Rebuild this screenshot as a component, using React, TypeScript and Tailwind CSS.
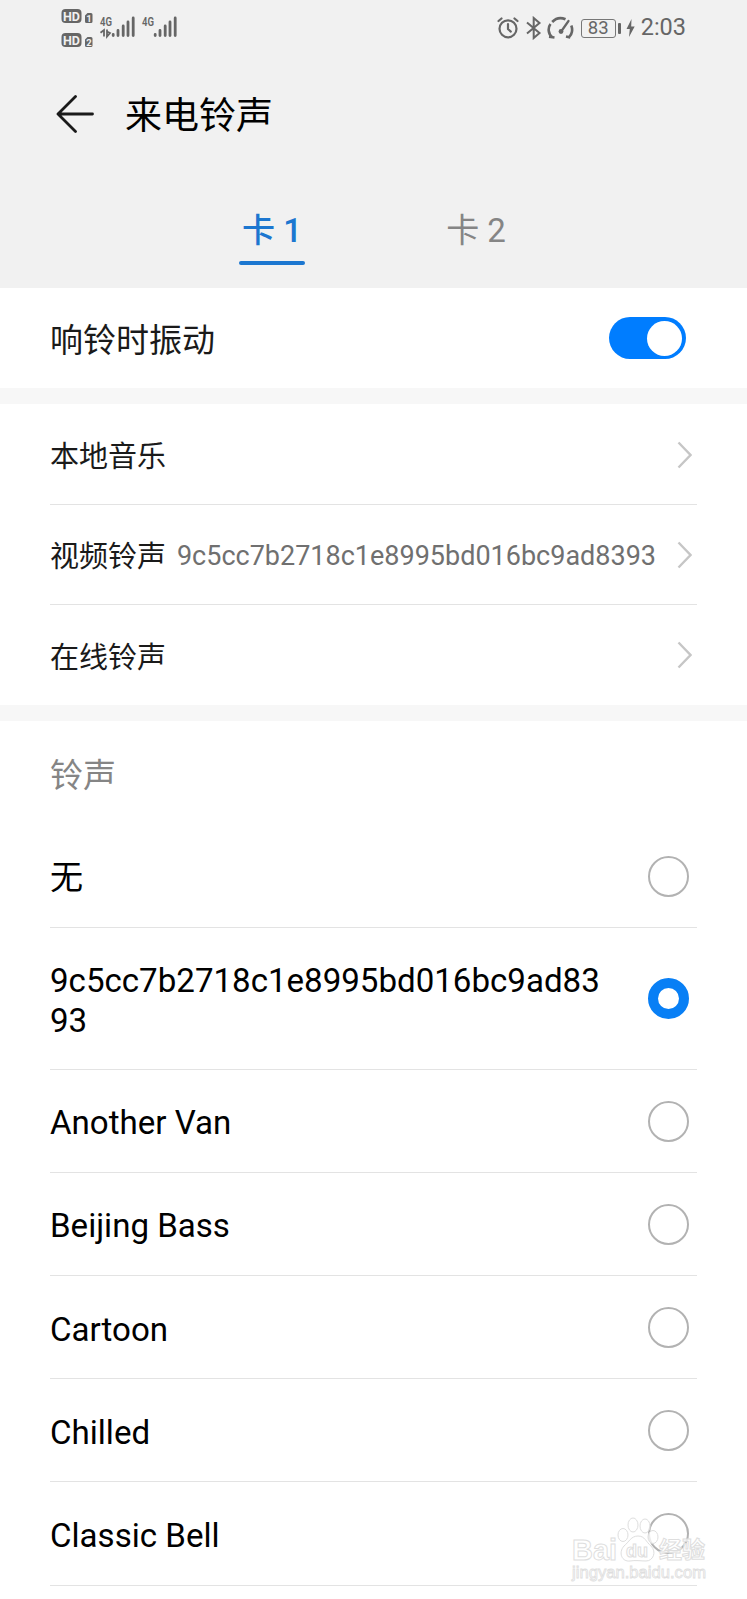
import React, { useState } from 'react';
import clsx from 'clsx';

const HASH = '9c5cc7b2718c1e8995bd016bc9ad8393';

const links = [
  { label: '本地音乐', value: '' },
  { label: '视频铃声', value: HASH },
  { label: '在线铃声', value: '' },
];

const ringtones = ['无', HASH, 'Another Van', 'Beijing Bass', 'Cartoon', 'Chilled', 'Classic Bell'];

function HdBadge({ sim }: { sim: number }) {
  return (
    <svg width="32" height="14" viewBox="0 0 32 14" className="block overflow-visible">
      <rect x="0.5" y="0" width="20" height="14" rx="4" fill="#666" />
      <text x="10.5" y="11.8" textAnchor="middle" fontSize="13.5" fontWeight="700" fill="#f1f1f1" textLength="17" lengthAdjust="spacingAndGlyphs">
        HD
      </text>
      <path d="M24 6.5 26.5 4H30a1.5 1.5 0 0 1 1.5 1.5v7A1.5 1.5 0 0 1 30 14h-4.5A1.5 1.5 0 0 1 24 12.5Z" fill="#666" />
      <text x="27.9" y="12.6" textAnchor="middle" fontSize="9.5" fontWeight="700" fill="#f1f1f1">
        {sim}
      </text>
    </svg>
  );
}

function Signal({ data }: { data?: boolean }) {
  return (
    <svg width="36" height="22" viewBox="0 0 36 22" className="block overflow-visible">
      <text x="0" y="10" fontSize="13.5" fontWeight="600" fill="#666" textLength="12" lengthAdjust="spacingAndGlyphs">
        4G
      </text>
      {data && <path d="M0.5 16.8 4 14v6.500M7 13.500v7l3-3.500-3-1.500" fill="none" stroke="#666" strokeWidth="1.800" />}
      <path d="M13.200 18.500v1M18 14.500v5M23.200 10v9.500M28 6v13.500M33.200 2v17.500" stroke="#666" strokeWidth="2.800" strokeLinecap="round" />
    </svg>
  );
}

function StatusBar() {
  return (
    <div className="flex h-14 items-start justify-between pl-[61px] pr-[62px] text-[#666]">
      <div className="flex">
        <div className="flex flex-col gap-[10px] pt-[9px]">
          <HdBadge sim={1} />
          <HdBadge sim={2} />
        </div>
        <div className="flex gap-[6px] pl-[7px] pt-[16px]">
          <Signal data />
          <Signal />
        </div>
      </div>
      <div className="flex h-14 items-center">
        <svg width="22" height="22" viewBox="0 0 22 22" fill="none" stroke="#666" strokeWidth="2.200" strokeLinecap="round">
          <circle cx="11" cy="11.800" r="8.500" />
          <path d="M11 7v5l2.800 2.600M1.500 4 4.500 1.500M17.500 1.500l3 2.500" />
        </svg>
        <svg width="16" height="24" viewBox="0 0 16 24" className="ml-[7px]" fill="none" stroke="#666" strokeWidth="2">
          <path d="m1 6.500 12.500 10.500-5.800 5V2l5.800 5L1 17.500" />
        </svg>
        <svg width="28" height="24" viewBox="0 0 28 24" className="ml-[5px]" fill="none" stroke="#666" strokeWidth="2.600">
          <path d="M5.500 21.500C.8 18 .8 11.500 3.500 8M5.200 6C9 2 14 1.300 18.500 3.300M24.300 9.500c1.600 4.500.7 9-3 12M2 20.800l5.500.7M19 20.500l4.300 1" />
          <path d="M14.500 15 21.500 5" strokeWidth="2.200" strokeLinecap="round" />
          <circle cx="14" cy="15.500" r="2.400" fill="#666" stroke="none" />
        </svg>
        <div className="ml-[6px] flex h-[19px] w-[35px] items-center justify-center rounded-[3px] border-[1.500px] border-[#777] text-[18.500px] leading-none">
          83
        </div>
        <div className="ml-[2px] h-[11px] w-[3px] rounded-[1px] bg-[#666]" />
        <svg width="9" height="18" viewBox="0 0 9 18" className="ml-[5px]">
          <path d="M5.500 0 .5 10h3.300L3 18l5.700-10.500H5.200Z" fill="#666" />
        </svg>
        <span className="-mr-px ml-[6px] text-[23.500px] leading-none">2:03</span>
      </div>
    </div>
  );
}

function Tab({ label, active, onClick }: { label: string; active: boolean; onClick: () => void }) {
  return (
    <button
      onClick={onClick}
      className={clsx(
        'flex h-[55px] w-[66px] flex-col items-center justify-between whitespace-nowrap text-[33px] leading-[42px]',
        active ? 'font-medium text-[#1c77d0]' : 'text-[#858585]',
      )}
    >
      <span>{label}</span>
      <span className={clsx('h-1 w-full rounded-full', active && 'bg-[#1c77d0]')} />
    </button>
  );
}

function Radio({ checked }: { checked: boolean }) {
  return (
    <span
      className={clsx(
        'mr-[8px] size-[41px] shrink-0 rounded-full bg-white',
        checked ? 'border-[10px] border-[#087ff5]' : 'border-2 border-[#b2b2b2]',
      )}
    />
  );
}

// Wordmark with paw, laid over the bottom right corner
function Watermark() {
  return (
    <svg
      width="140"
      height="70"
      viewBox="0 0 140 70"
      className="pointer-events-none absolute bottom-[13px] right-[35px] overflow-visible font-['Liberation_Sans','Noto_Sans_CJK_SC',sans-serif]"
      fill="#fff"
      fillOpacity="0.75"
      stroke="#dedede"
      strokeWidth="1"
    >
      <ellipse cx="51" cy="19" rx="5" ry="6.500" />
      <ellipse cx="61" cy="9" rx="5" ry="7" />
      <ellipse cx="73" cy="10" rx="5" ry="7" />
      <ellipse cx="81" cy="21" rx="5" ry="6.500" />
      <path d="M66 20c7 0 8 6 13 10 6 6 2 15-5 15-5 0-11-1-16 0-8 1-12-8-6-15 5-4 7-10 14-10Z" />
      <text x="0" y="43.500" fontSize="30" fontWeight="700" textLength="45" lengthAdjust="spacingAndGlyphs">Bai</text>
      <text x="54" y="41" fontSize="18" fontWeight="700" textLength="22" lengthAdjust="spacingAndGlyphs">du</text>
      <text x="87" y="42" fontSize="23" fontWeight="700" textLength="46">经验</text>
      <text x="0" y="62" fontSize="16" strokeWidth="0.800" textLength="134" lengthAdjust="spacingAndGlyphs">jingyan.baidu.com</text>
    </svg>
  );
}

export default function App() {
  const [tab, setTab] = useState(0);
  const [vibrate, setVibrate] = useState(true);
  const [selected, setSelected] = useState(1);

  return (
    <div className="relative h-[1599px] w-[747px] overflow-hidden bg-white font-[Roboto,'Noto_Sans_CJK_SC',sans-serif] text-black">
      <header className="h-[288px] bg-[#f1f1f1]">
        <StatusBar />
        <div className="flex h-[116px] items-center pl-[56px]">
          <svg width="38" height="38" viewBox="0 0 38 38" fill="none" stroke="#1a1a1a" strokeWidth="2.800" strokeLinecap="round" strokeLinejoin="round">
            <path d="M19.500 1.500 2 19l17.500 17.500M2 19h34.500" />
          </svg>
          <h1 className="ml-[31px] pt-[5px] text-[37px] leading-none">来电铃声</h1>
        </div>
        <nav className="flex gap-[138px] pl-[239px] pt-[38px]">
          <Tab label="卡 1" active={tab === 0} onClick={() => setTab(0)} />
          <Tab label="卡 2" active={tab === 1} onClick={() => setTab(1)} />
        </nav>
      </header>

      <section className="flex h-[100px] items-center justify-between pl-[50px] pr-[61px]">
        <span className="pt-[4px] text-[33px] leading-none text-[#1a1a1a]">响铃时振动</span>
        <button
          onClick={() => setVibrate(!vibrate)}
          className={clsx(
            'flex h-[42px] w-[77px] items-center rounded-full px-1',
            vibrate ? 'justify-end bg-[#007dff]' : 'bg-gray-300',
          )}
        >
          <span className="size-[35px] rounded-full bg-white" />
        </button>
      </section>

      <div className="h-4 bg-[#f7f7f7]" />

      <section className="pl-[50px] pr-[50px] pt-px">
        {links.map((link, index) => (
          <div
            key={link.label}
            className={clsx('flex h-[100px] items-center border-[#e3e3e3] pr-[5px]', index < 2 && 'border-b')}
          >
            <span className="pt-[6px] text-[29px] leading-none text-[#1a1a1a]">{link.label}</span>
            <span className="ml-auto mr-[21px] pt-[4px] text-[27px] leading-none text-[#707070]">{link.value}</span>
            <svg width="15" height="28" viewBox="0 0 15 28" fill="none" stroke="#c6c6c6" strokeWidth="2.400">
              <path d="M1.500 1.500 13.500 14 1.500 26.500" />
            </svg>
          </div>
        ))}
      </section>

      <div className="h-4 bg-[#f7f7f7]" />

      <section className="pl-[50px] pr-[50px]">
        <h2 className="flex h-[104px] items-center pt-[4px] text-[33px] leading-none text-[#858585]">铃声</h2>
        <ul>
          {ringtones.map((name, index) => (
            <li
              key={name}
              onClick={() => setSelected(index)}
              className={clsx(
                'flex items-center justify-between border-b border-[#e3e3e3]',
                name === HASH ? 'h-[142px]' : 'h-[103.100px]',
              )}
            >
              <span className="w-[555px] break-all pt-[4px] text-[33.100px] leading-[39.500px]">{name}</span>
              <Radio checked={selected === index} />
            </li>
          ))}
        </ul>
      </section>

      <Watermark />
    </div>
  );
}
